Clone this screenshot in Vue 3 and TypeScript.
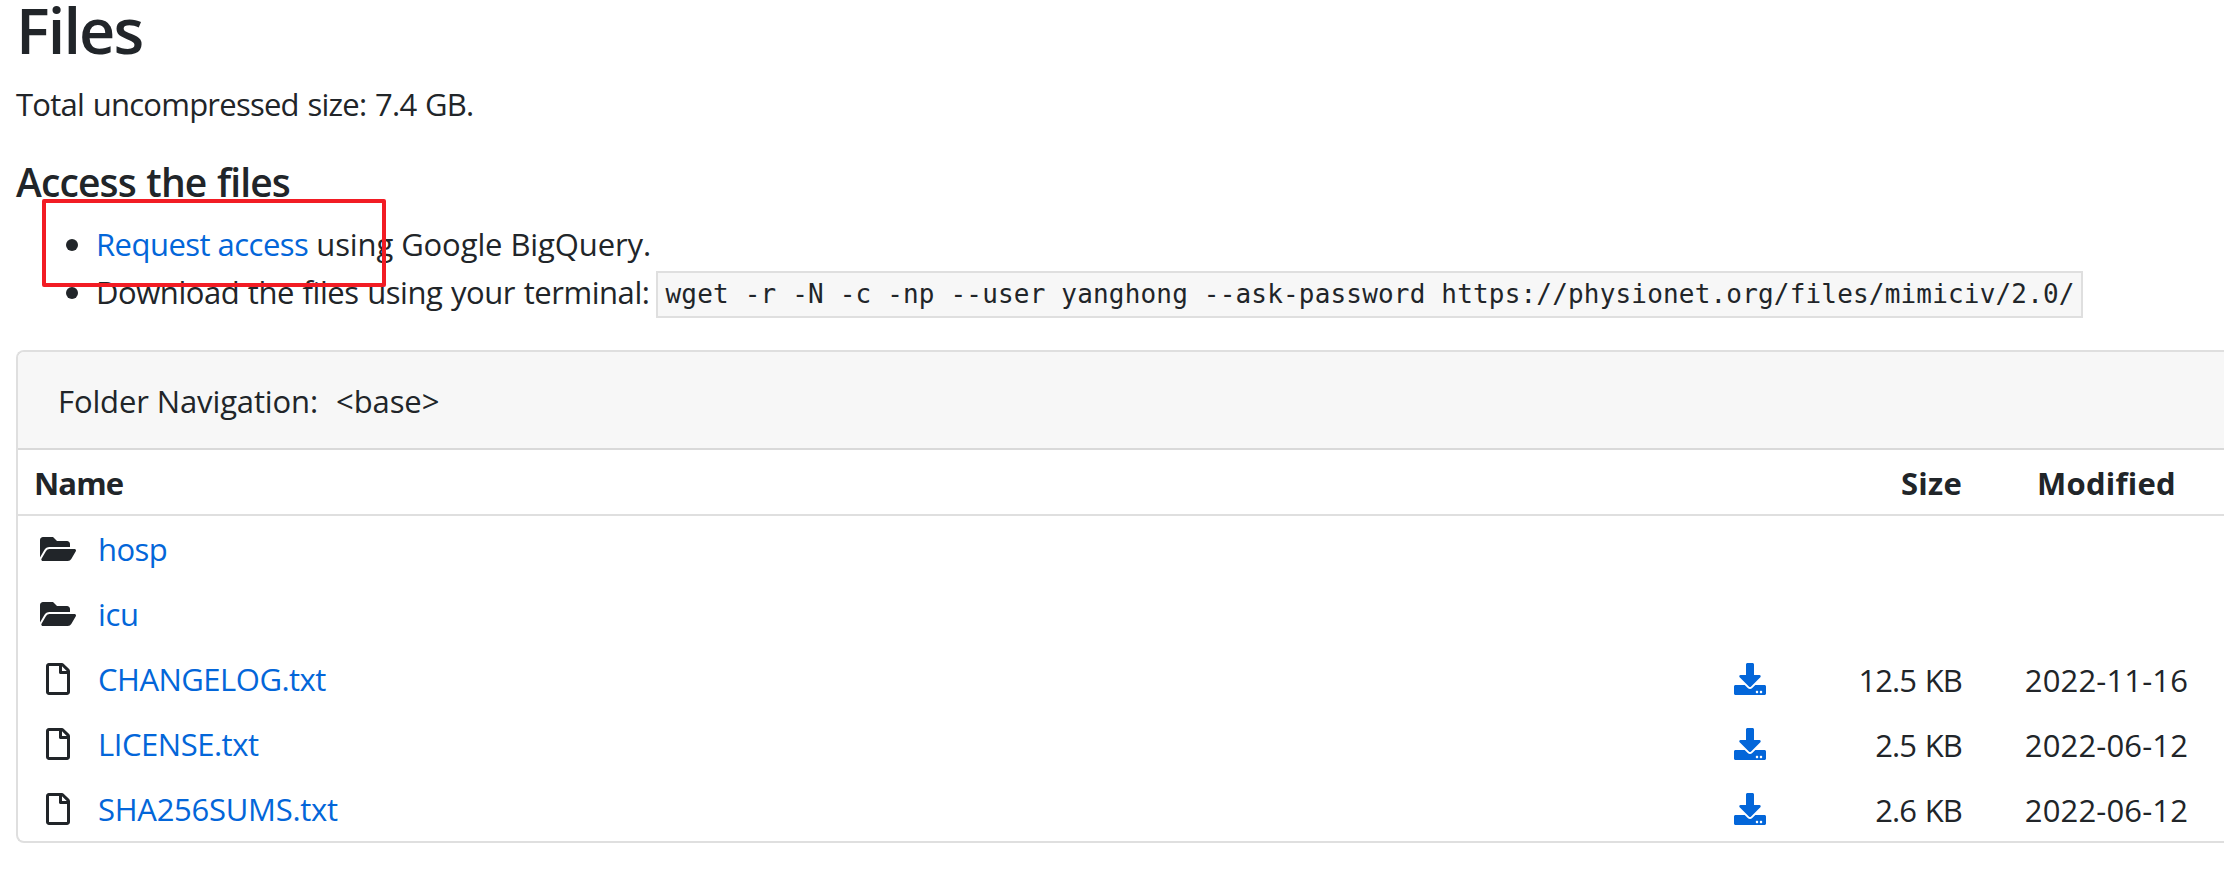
<script setup lang="ts">
interface Entry {
  name: string
  kind: 'folder' | 'file'
  tracking: string
  size?: string
  modified?: string
}

const command =
  'wget -r -N -c -np --user yanghong --ask-password https://physionet.org/files/mimiciv/2.0/'

const entries: Entry[] = [
  { name: 'hosp', kind: 'folder', tracking: '-0.6px' },
  { name: 'icu', kind: 'folder', tracking: '-0.3px' },
  { name: 'CHANGELOG.txt', kind: 'file', tracking: '-0.5px', size: '12.5 KB', modified: '2022-11-16' },
  { name: 'LICENSE.txt', kind: 'file', tracking: '-0.46px', size: '2.5 KB', modified: '2022-06-12' },
  { name: 'SHA256SUMS.txt', kind: 'file', tracking: '-0.27px', size: '2.6 KB', modified: '2022-06-12' },
]
</script>

<template>
  <main class="page">
    <h2 class="title">Files</h2>
    <p class="total">Total uncompressed size: 7.4 GB.</p>

    <h5 class="subtitle">Access the files</h5>
    <ul class="access">
      <li>
        <span class="request-line"><a class="link request">Request access</a> using Google BigQuery.</span>
        <span class="marker"></span>
      </li>
      <li>
        <span class="download-label">Download the files using your terminal:</span>
        <code class="command">{{ command }}</code>
      </li>
    </ul>

    <section class="card">
      <div class="card-header">
        <span class="nav-label">Folder Navigation:</span>
        <span class="nav-base">&lt;base&gt;</span>
      </div>
      <table class="files">
        <colgroup>
          <col />
          <col class="col-download" />
          <col class="col-size" />
          <col class="col-modified" />
        </colgroup>
        <thead>
          <tr>
            <th class="name-head">Name</th>
            <th></th>
            <th class="size">Size</th>
            <th class="modified">Modified</th>
          </tr>
        </thead>
        <tbody>
          <tr v-for="entry in entries" :key="entry.name">
            <td>
              <div class="entry">
                <svg v-if="entry.kind === 'folder'" class="icon-folder" viewBox="0 0 576 512">
                  <path d="M572.694 292.093L500.27 416.248A63.997 63.997 0 0 1 444.989 448H45.025c-18.523 0-30.064-20.093-20.731-36.093l72.424-124.155A64 64 0 0 1 152 256h399.964c18.523 0 30.064 20.093 20.73 36.093zM152 224h328v-48c0-26.51-21.49-48-48-48H272l-64-64H48C21.49 64 0 85.49 0 112v278.046l69.077-118.418C86.214 242.25 117.989 224 152 224z" />
                </svg>
                <svg v-else class="icon-file" viewBox="0 0 384 512">
                  <path d="M369.9 97.9L286 14C277 5 264.8-.1 252.1-.1H48C21.5 0 0 21.5 0 48v416c0 26.5 21.5 48 48 48h288c26.5 0 48-21.5 48-48V131.9c0-12.7-5.1-25-14.1-34zM332.1 128H256V51.9l76.1 76.1zM48 464V48h160v104c0 13.3 10.7 24 24 24h104v288H48z" />
                </svg>
                <a class="link" :style="{ letterSpacing: entry.tracking }">{{ entry.name }}</a>
              </div>
            </td>
            <td>
              <svg v-if="entry.size" class="icon-download" viewBox="0 0 512 512">
                <path d="M216 0h80c13.3 0 24 10.7 24 24v168h87.7c17.8 0 26.7 21.5 14.1 34.1L269.7 378.3c-7.5 7.5-19.8 7.5-27.3 0L90.1 226.1c-12.6-12.6-3.7-34.1 14.1-34.1H192V24c0-13.3 10.7-24 24-24zm296 376v112c0 13.3-10.7 24-24 24H24c-13.3 0-24-10.7-24-24V376c0-13.3 10.7-24 24-24h146.7l49 49c20.1 20.1 52.5 20.1 72.6 0l49-49H488c13.3 0 24 10.7 24 24zm-124 88c0-11-9-20-20-20s-20 9-20 20 9 20 20 20 20-9 20-20zm64 0c0-11-9-20-20-20s-20 9-20 20 9 20 20 20 20-9 20-20z" />
              </svg>
            </td>
            <td class="size">{{ entry.size }}</td>
            <td class="modified">{{ entry.modified }}</td>
          </tr>
        </tbody>
      </table>
    </section>
  </main>
</template>

<style>
body {
  margin: 0;
  background: #fff;
}
</style>

<style scoped>
.page {
  height: 879px;
  box-sizing: border-box;
  padding-left: 16px;
  display: flex;
  flex-direction: column;
  color: #212529;
  font: 400 31px/48px "Open Sans", "Noto Sans", sans-serif;
}
.title {
  margin: 0;
  font-size: 63px;
  line-height: 60px;
  font-weight: 600;
  letter-spacing: -1.87px;
}
.total {
  margin: 20px 0 0;
  letter-spacing: -0.76px;
  word-spacing: 1.4px;
}
.subtitle {
  margin: 30px 0 0;
  font-size: 39px;
  line-height: 48px;
  font-weight: 600;
  letter-spacing: -0.85px;
  word-spacing: 1.2px;
}
.access {
  margin: 14px 0 32px;
  padding: 0 0 0 50px;
  list-style: none;
}
.access li {
  position: relative;
  display: flex;
  height: 48px;
  white-space: nowrap;
}
.access li:last-child {
  height: 50px;
}
.access li::before {
  content: "";
  width: 12px;
  height: 12px;
  margin: 19px 18px 0 0;
  border-radius: 50%;
  background: #212529;
}
.link {
  color: #0366d9;
}
.request-line {
  letter-spacing: -0.1px;
}
.request {
  letter-spacing: -0.53px;
}
.marker {
  position: absolute;
  z-index: 1;
  left: -24px;
  top: -21px;
  width: 336px;
  height: 80px;
  border: 4px solid #f21c24;
  border-radius: 2px;
}
.download-label {
  letter-spacing: -0.45px;
  word-spacing: 1px;
}
.command {
  box-sizing: border-box;
  width: 1427px;
  height: 47px;
  margin: 3px 0 0 7px;
  padding-left: 7px;
  border: 2px solid #dfdfdf;
  background: #f7f7f7;
  font: 26px/43px "DejaVu Sans Mono", monospace;
  letter-spacing: 0.18px;
}
.card {
  border: 2px solid #dfdfdf;
  border-right: 0;
  border-radius: 8px 0 0 8px;
  overflow: hidden;
}
.card-header {
  box-sizing: border-box;
  height: 98px;
  padding: 25px 0 0 40px;
  display: flex;
  gap: 18px;
  background: #f7f7f7;
  border-bottom: 2px solid #d9d9d9;
}
.nav-label {
  letter-spacing: -0.12px;
}
.nav-base {
  letter-spacing: -0.1px;
}
.files {
  width: 100%;
  table-layout: fixed;
  border-collapse: separate;
  border-spacing: 0;
}
.col-download {
  width: 100px;
}
.col-size {
  width: 189px;
}
.col-modified {
  width: 235px;
}
th,
td {
  box-sizing: border-box;
  padding: 0;
  height: 65px;
}
th {
  height: 66px;
  padding-top: 1px;
  border-bottom: 2px solid #dfdfdf;
  letter-spacing: 0.25px;
}
th.name-head {
  padding-left: 16px;
  text-align: left;
  letter-spacing: -0.9px;
}
.size {
  padding-right: 27px;
  text-align: right;
}
td.size {
  padding-top: 2px;
  letter-spacing: -0.9px;
  word-spacing: 1.5px;
}
.modified {
  text-align: center;
}
td.modified {
  padding-top: 2px;
  letter-spacing: 0.15px;
}
.entry {
  display: flex;
  align-items: center;
  padding-left: 22px;
}
.icon-folder {
  width: 36px;
  height: 32px;
  margin: 1px 22px 0 0;
  fill: #212529;
}
.icon-file {
  width: 24px;
  height: 32px;
  margin: 1px 28px 0 6px;
  fill: #212529;
}
.icon-download {
  display: block;
  width: 32px;
  height: 32px;
  margin: 1px 0 0 34px;
  fill: #0366d9;
}
</style>
